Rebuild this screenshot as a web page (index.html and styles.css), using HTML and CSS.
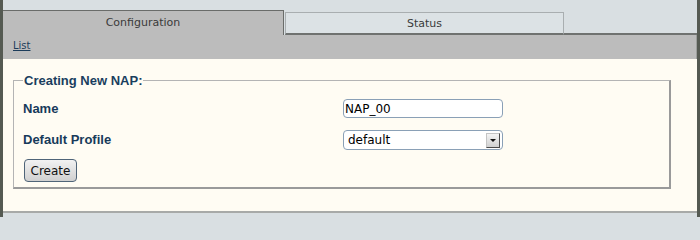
FILE: index.html
```html
<!DOCTYPE html>
<html>
<head>
<meta charset="utf-8">
<title>Creating New NAP</title>
<link rel="stylesheet" href="styles.css">
</head>
<body>
<div class="page">
  <div class="tabs">
    <div class="tab tab-active">Configuration</div>
    <div class="tab tab-inactive">Status</div>
    <div class="tab-rest"></div>
  </div>
  <div class="subbar"><a class="sublink" href="#">List</a></div>
  <div class="content">
    <fieldset class="box">
      <legend class="box-title">Creating New NAP:</legend>
      <div class="form-grid">
        <label class="field-label" for="name">Name</label>
        <input class="text-input" id="name" type="text" value="NAP_00">
        <label class="field-label" for="profile">Default Profile</label>
        <div class="select-wrap">
          <select class="select-input" id="profile"><option>default</option></select>
          <span class="select-btn"><span class="select-arrow"></span></span>
        </div>
      </div>
      <button class="create-btn" type="button">Create</button>
    </fieldset>
  </div>
  <div class="footer-strip"></div>
</div>
</body>
</html>
```
FILE: styles.css
```css
html, body {
  margin: 0;
  padding: 0;
  height: 217px;
  overflow: hidden;
  background: #d9dfe2;
}
.page {
  height: 217px;
  border-left: 3px solid #555a52;
  border-right: 3px solid #555a52;
  background: #d9dfe2;
  display: flex;
  flex-direction: column;
  font-family: "DejaVu Sans", "Liberation Sans", sans-serif;
  box-sizing: border-box;
}
.tabs {
  display: flex;
  align-items: flex-end;
  height: 35px;
  flex: none;
  box-sizing: border-box;
  padding-top: 10px;
}
.tab {
  box-sizing: border-box;
  font-size: 11px;
  line-height: 13px;
  color: #3a3a3a;
  text-align: center;
}
.tab-active {
  width: 281px;
  height: 25px;
  background: #bcbcbc;
  border-top: 1px solid #6a6c6a;
  border-right: 1px solid #6a6c6a;
  padding-top: 5px;
}
.tab-inactive {
  width: 279px;
  height: 23px;
  margin-left: 1px;
  background: #dce2e5;
  border: 1px solid #a9aeb0;
  border-bottom: 2px solid #6f7270;
  padding-top: 4px;
}
.tab-rest {
  flex: 1;
  height: 2px;
  background: #6f7270;
}
.subbar {
  height: 24px;
  flex: none;
  background: #bcbcbc;
  border-right: 1px solid #9c9e9c;
  padding-left: 10px;
  box-sizing: border-box;
  padding-top: 5px;
  font-size: 10px;
  line-height: 12px;
}
.sublink {
  font-size: 10px;
  color: #1c3c5a;
  text-decoration: underline;
}
.content {
  height: 152px;
  flex: none;
  background: #fffcf3;
  box-sizing: border-box;
  padding: 14px 26px 0 10px;
}
.box {
  margin: 0;
  padding: 0 8px 5px 9px;
  border-color: #b4b4b4 #9a9a9a #9a9a9a #b4b4b4;
  border-style: solid;
  border-width: 1px 2px 2px 1px;
}
.box-title {
  font-family: "Liberation Sans", Arial, sans-serif;
  font-size: 13px;
  line-height: 15px;
  font-weight: bold;
  color: #1a3e5e;
  padding: 0 1px;
  margin-left: 0;
}
.form-grid {
  display: grid;
  grid-template-columns: 320px 160px;
  row-gap: 11px;
  align-items: center;
  margin-top: 11px;
}
.field-label {
  font-family: "Liberation Sans", Arial, sans-serif;
  font-size: 13px;
  font-weight: bold;
  color: #173a5a;
}
.text-input {
  width: 160px;
  height: 19px;
  box-sizing: border-box;
  border: 1px solid #8aa0b6;
  border-radius: 4px;
  font-family: "DejaVu Sans", sans-serif;
  font-size: 12px;
  padding: 0 0 0 1px;
  color: #000;
  background: #fff;
  outline: none;
}
.select-wrap {
  position: relative;
  width: 160px;
  height: 20px;
}
.select-input {
  appearance: none;
  -webkit-appearance: none;
  width: 160px;
  height: 20px;
  box-sizing: border-box;
  border: 1px solid #8aa0b6;
  border-radius: 4px;
  background: #fff;
  font-family: "DejaVu Sans", sans-serif;
  font-size: 12px;
  padding: 0 4px;
  color: #000;
}
.select-btn {
  position: absolute;
  right: 3px;
  top: 4px;
  width: 14px;
  height: 15px;
  box-sizing: border-box;
  background: linear-gradient(#f4f4f4, #d0d0d0);
  border: 1px solid #c4c4c4;
  border-right-color: #4a4a4a;
  border-bottom-color: #4a4a4a;
  display: flex;
  align-items: center;
  justify-content: center;
}
.select-arrow {
  width: 0;
  height: 0;
  border-left: 3px solid transparent;
  border-right: 3px solid transparent;
  border-top: 3px solid #111;
}
.create-btn {
  display: block;
  margin-top: 10px;
  margin-left: 1px;
  width: 53px;
  height: 23px;
  box-sizing: border-box;
  border: 1px solid #4f6478;
  border-radius: 4px;
  background: linear-gradient(#f2f2f2, #d0d0d0);
  font-family: "DejaVu Sans", sans-serif;
  font-size: 12px;
  color: #111;
  padding: 0;
}
.footer-strip {
  flex: 1;
  border-top: 2px solid #a8aaa8;
  background: #d9dfe2;
}
```
